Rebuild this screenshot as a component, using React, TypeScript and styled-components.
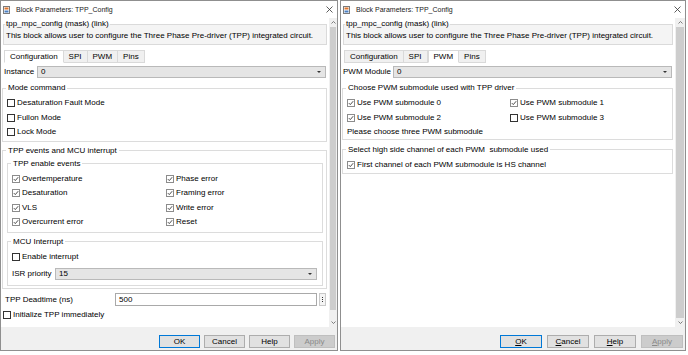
import React from "react";
import styled, { createGlobalStyle } from "styled-components";

const GlobalStyle = createGlobalStyle`
  html, body {
    margin: 0;
    padding: 0;
    background: #ffffff;
  }
  body {
    font-family: "Liberation Sans", Arial, sans-serif;
    font-size: 8px;
    line-height: 10px;
    color: #000000;
  }
  * {
    box-sizing: border-box;
  }
`;

const Desktop = styled.div`
  display: flex;
  align-items: flex-start;
  gap: 2px;
  height: 355px;
`;

const Window = styled.div<{ $width: number }>`
  width: ${(p) => p.$width}px;
  height: 351px;
  border: 1px solid #8f8f8f;
  display: flex;
  flex-direction: column;
  background: #ffffff;
`;

const TitleBar = styled.div`
  height: 17px;
  display: flex;
  align-items: center;
  padding: 0 4px 0 2px;
  font-size: 7px;
  color: #222;
`;

const TitleText = styled.span`
  flex: 1;
  margin-left: 6px;
`;

const Body = styled.div`
  flex: 1;
  display: flex;
  min-height: 0;
`;

const Content = styled.div<{ $padLeft: number; $padRight: number }>`
  flex: 1;
  display: flex;
  flex-direction: column;
  padding: 1px ${(p) => p.$padRight}px 0 ${(p) => p.$padLeft}px;
`;

const MaskBox = styled.fieldset`
  margin: 0 0 0 1px;
  padding: 2px 2px 3px;
  border: 1px solid #dadada;
  background: #f4f4f4;
  min-width: 0;
`;

const MaskLegend = styled.legend`
  padding: 0 1px;
  margin-left: -1px;
`;

const TabStrip = styled.div`
  display: flex;
  height: 13px;
  margin: 5px 0 0 2px;
`;

const Tab = styled.div<{ $active?: boolean }>`
  padding: 0 5px;
  line-height: 11px;
  border: 1px solid #d9d9d9;
  border-left-width: ${(p) => (p.$active ? 1 : 0)}px;
  border-bottom-color: ${(p) => (p.$active ? "#ffffff" : "#d9d9d9")};
  background: ${(p) => (p.$active ? "#ffffff" : "#f0f0f0")};
  &:first-child {
    border-left-width: 1px;
  }
`;

const FieldRow = styled.div<{ $top: number; $padLeft?: number }>`
  display: flex;
  align-items: center;
  margin-top: ${(p) => p.$top}px;
  padding-left: ${(p) => p.$padLeft ?? 0}px;
`;

const FieldLabel = styled.span<{ $width: number }>`
  width: ${(p) => p.$width}px;
  flex-shrink: 0;
  white-space: nowrap;
`;

const Combo = styled.div`
  flex: 1;
  height: 12px;
  background: #e5e5e5;
  border: 1px solid #b9b9b9;
  display: flex;
  align-items: center;
  justify-content: space-between;
  padding: 0 4px 0 3px;
  margin-right: 1px;
`;

const ComboArrow = styled.span`
  width: 0;
  height: 0;
  border-left: 2px solid transparent;
  border-right: 2px solid transparent;
  border-top: 2px solid #333;
`;

const TextField = styled.div`
  flex: 1;
  height: 13px;
  background: #ffffff;
  border: 1px solid #a9a9a9;
  padding: 0 3px;
  line-height: 11px;
`;

const MoreButton = styled.div`
  width: 7px;
  height: 13px;
  margin: 0 1px 0 2px;
  border: 1px solid #c9c9c9;
  background: #f4f4f4;
  display: flex;
  flex-direction: column;
  align-items: center;
  justify-content: center;
  gap: 1px;
  span {
    width: 1px;
    height: 1px;
    background: #333;
  }
`;

const Group = styled.fieldset<{ $top: number; $bottom?: number; $right?: number }>`
  margin: ${(p) => p.$top}px 0 0 0;
  padding: 3px ${(p) => p.$right ?? 0}px ${(p) => p.$bottom ?? 1}px 4px;
  border: 1px solid #dcdcdc;
  min-width: 0;
`;

const Legend = styled.legend`
  padding: 0 2px;
  margin-left: -1px;
`;

const CheckGrid = styled.div<{ $col: number }>`
  display: grid;
  grid-template-columns: ${(p) => p.$col}px 1fr;
`;

const CheckRow = styled.div<{ $height?: number; $padLeft?: number }>`
  display: flex;
  align-items: center;
  gap: 2px;
  height: ${(p) => p.$height ?? 14.5}px;
  padding-left: ${(p) => p.$padLeft ?? 0}px;
  white-space: nowrap;
`;

const Box = styled.span<{ $checked?: boolean }>`
  width: 8px;
  height: 8px;
  flex-shrink: 0;
  border: 1px solid ${(p) => (p.$checked ? "#8c8c8c" : "#333333")};
  background: #ffffff;
  display: inline-flex;
  align-items: center;
  justify-content: center;
`;

const Note = styled.div`
  height: 13.5px;
  line-height: 13px;
`;

const ScrollTrack = styled.div<{ $width: number }>`
  width: ${(p) => p.$width}px;
  display: flex;
  flex-direction: column;
  background: #f0f0f0;
`;

const ScrollArrow = styled.div`
  height: 9px;
  display: flex;
  align-items: center;
  justify-content: center;
`;

const ScrollThumb = styled.div<{ $grow: number }>`
  flex: ${(p) => p.$grow};
  background: #cdcdcd;
  margin: 0 1px;
`;

const ScrollGap = styled.div<{ $grow: number }>`
  flex: ${(p) => p.$grow};
`;

const ButtonBar = styled.div<{ $gap: number }>`
  height: 23px;
  background: #f0f0f0;
  display: flex;
  justify-content: flex-end;
  align-items: flex-start;
  gap: ${(p) => p.$gap}px;
  padding: 8px 2px 0 0;
`;

const DialogButton = styled.div<{ $width: number; $variant?: "default" | "disabled" }>`
  width: ${(p) => p.$width}px;
  height: 13px;
  line-height: 11px;
  text-align: center;
  border: 1px solid
    ${(p) =>
      p.$variant === "default" ? "#0078d7" : p.$variant === "disabled" ? "#bfbfbf" : "#adadad"};
  background: ${(p) => (p.$variant === "disabled" ? "#cccccc" : "#e1e1e1")};
  color: ${(p) => (p.$variant === "disabled" ? "#8a8a8a" : "#000000")};
  u {
    text-decoration: underline;
    text-underline-offset: 1px;
  }
`;

const BlockIcon = () => (
  <svg width="7" height="8" viewBox="0 0 7 8">
    <rect x="0.5" y="0.5" width="6" height="7" fill="#ffffff" stroke="#7b7b7b" />
    <rect x="1.5" y="1.5" width="4" height="2" fill="#e0752d" />
    <rect x="1.5" y="4.5" width="4" height="2" fill="#4a7fc1" />
  </svg>
);

const CloseIcon = () => (
  <svg width="7" height="7" viewBox="0 0 7 7">
    <path d="M0.5 0.5 L6.5 6.5 M6.5 0.5 L0.5 6.5" stroke="#333" strokeWidth="0.8" />
  </svg>
);

const Check = ({ checked, children, padLeft }: { checked?: boolean; children: React.ReactNode; padLeft?: number }) => (
  <CheckRow $padLeft={padLeft}>
    <Box $checked={checked}>
      {checked && (
        <svg width="6" height="6" viewBox="0 0 6 6">
          <path d="M0.8 3.1 L2.3 4.6 L5.2 1.2" stroke="#3a3a3a" strokeWidth="0.9" fill="none" />
        </svg>
      )}
    </Box>
    {children}
  </CheckRow>
);

const Scrollbar = ({ width, thumb, gap }: { width: number; thumb: number; gap: number }) => (
  <ScrollTrack $width={width}>
    <ScrollArrow>
      <svg width="5" height="3" viewBox="0 0 5 3">
        <path d="M0.5 2.5 L2.5 0.5 L4.5 2.5" stroke="#606060" strokeWidth="0.8" fill="none" />
      </svg>
    </ScrollArrow>
    <ScrollThumb $grow={thumb} />
    <ScrollGap $grow={gap} />
    <ScrollArrow>
      <svg width="5" height="3" viewBox="0 0 5 3">
        <path d="M0.5 0.5 L2.5 2.5 L4.5 0.5" stroke="#606060" strokeWidth="0.8" fill="none" />
      </svg>
    </ScrollArrow>
  </ScrollTrack>
);

const tabs = ["Configuration", "SPI", "PWM", "Pins"];

const Dialog = ({
  width,
  activeTab,
  padLeft,
  padRight,
  scrollWidth,
  thumb,
  gap,
  buttonWidth,
  buttonGap,
  mnemonics,
  children,
}: {
  width: number;
  activeTab: string;
  padLeft: number;
  padRight: number;
  scrollWidth: number;
  thumb: number;
  gap: number;
  buttonWidth: number;
  buttonGap: number;
  mnemonics?: boolean;
  children: React.ReactNode;
}) => {
  const label = (text: string) =>
    mnemonics ? (
      <>
        <u>{text[0]}</u>
        {text.slice(1)}
      </>
    ) : (
      text
    );

  return (
    <Window $width={width}>
      <TitleBar>
        <BlockIcon />
        <TitleText>Block Parameters: TPP_Config</TitleText>
        <CloseIcon />
      </TitleBar>
      <Body>
        <Content $padLeft={padLeft} $padRight={padRight}>
          <MaskBox>
            <MaskLegend>tpp_mpc_config (mask) (link)</MaskLegend>
            This block allows user to configure the Three Phase Pre-driver (TPP) integrated circuit.
          </MaskBox>
          <TabStrip>
            {tabs.map((t) => (
              <Tab key={t} $active={t === activeTab}>
                {t}
              </Tab>
            ))}
          </TabStrip>
          {children}
        </Content>
        <Scrollbar width={scrollWidth} thumb={thumb} gap={gap} />
      </Body>
      <ButtonBar $gap={buttonGap}>
        <DialogButton $width={buttonWidth} $variant="default">
          {label("OK")}
        </DialogButton>
        <DialogButton $width={buttonWidth}>{label("Cancel")}</DialogButton>
        <DialogButton $width={buttonWidth}>{label("Help")}</DialogButton>
        <DialogButton $width={buttonWidth} $variant="disabled">
          {label("Apply")}
        </DialogButton>
      </ButtonBar>
    </Window>
  );
};

const ConfigurationTab = () => (
  <>
    <FieldRow $top={3} $padLeft={2}>
      <FieldLabel $width={33}>Instance</FieldLabel>
      <Combo>
        0<ComboArrow />
      </Combo>
    </FieldRow>
    <Group $top={5}>
      <Legend>Mode command</Legend>
      <Check>Desaturation Fault Mode</Check>
      <Check>Fullon Mode</Check>
      <Check>Lock Mode</Check>
    </Group>
    <Group $top={4} $right={3} $bottom={2}>
      <Legend>TPP events and MCU interrupt</Legend>
      <Group $top={0} $bottom={2}>
        <Legend>TPP enable events</Legend>
        <CheckGrid $col={154}>
          <Check checked>Overtemperature</Check>
          <Check checked>Phase error</Check>
          <Check checked>Desaturation</Check>
          <Check checked>Framing error</Check>
          <Check checked>VLS</Check>
          <Check checked>Write error</Check>
          <Check checked>Overcurrent error</Check>
          <Check checked>Reset</Check>
        </CheckGrid>
      </Group>
      <Group $top={4} $bottom={5} $right={4}>
        <Legend>MCU Interrupt</Legend>
        <Check>Enable interrupt</Check>
        <FieldRow $top={4}>
          <FieldLabel $width={43}>ISR priority</FieldLabel>
          <Combo>
            15
            <ComboArrow />
          </Combo>
        </FieldRow>
      </Group>
    </Group>
    <FieldRow $top={4} $padLeft={3}>
      <FieldLabel $width={110}>TPP Deadtime (ns)</FieldLabel>
      <TextField>500</TextField>
      <MoreButton>
        <span />
        <span />
        <span />
      </MoreButton>
    </FieldRow>
    <FieldRow $top={2}>
      <Check padLeft={1}>Initialize TPP immediately</Check>
    </FieldRow>
  </>
);

const PwmTab = () => (
  <>
    <FieldRow $top={3} $padLeft={1}>
      <FieldLabel $width={50}>PWM Module</FieldLabel>
      <Combo>
        0<ComboArrow />
      </Combo>
    </FieldRow>
    <Group $top={5} $bottom={0}>
      <Legend>Choose PWM submodule used with TPP driver</Legend>
      <CheckGrid $col={163}>
        <Check checked>Use PWM submodule 0</Check>
        <Check checked>Use PWM submodule 1</Check>
        <Check checked>Use PWM submodule 2</Check>
        <Check>Use PWM submodule 3</Check>
      </CheckGrid>
      <Note>Please choose three PWM submodule</Note>
    </Group>
    <Group $top={5} $bottom={1}>
      <Legend>Select high side channel of each PWM&nbsp; submodule used</Legend>
      <Check checked>First channel of each PWM submodule is HS channel</Check>
    </Group>
  </>
);

export default function App() {
  return (
    <>
      <GlobalStyle />
      <Desktop>
        <Dialog
          width={338}
          activeTab="Configuration"
          padLeft={1}
          padRight={2}
          scrollWidth={8}
          thumb={283}
          gap={8}
          buttonWidth={41}
          buttonGap={4}
        >
          <ConfigurationTab />
        </Dialog>
        <Dialog
          width={346}
          activeTab="PWM"
          padLeft={1}
          padRight={2}
          scrollWidth={10}
          thumb={1}
          gap={0}
          buttonWidth={42}
          buttonGap={5}
          mnemonics
        >
          <PwmTab />
        </Dialog>
      </Desktop>
    </>
  );
}
